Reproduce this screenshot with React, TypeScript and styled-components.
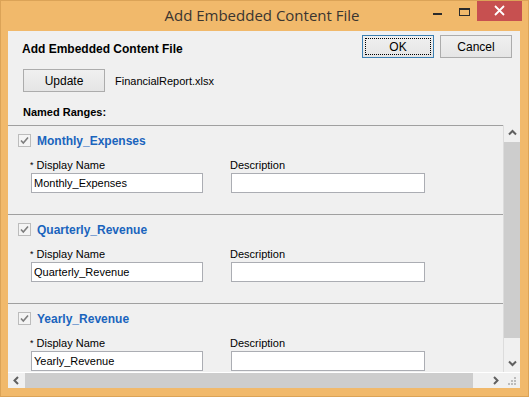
import React from 'react';
import styled, { createGlobalStyle } from 'styled-components';

const ranges = ['Monthly_Expenses', 'Quarterly_Revenue', 'Yearly_Revenue'];

const App = () => {
  return (
    <>
      <GlobalStyle />
      <Window>
        <TitleBar>
          <span />
          <Title>Add Embedded Content File</Title>
          <Captions>
            <CaptionButton $w={26}>
              <svg width="26" height="20">
                <rect x="6" y="12" width="9" height="2" fill="#2b2b2b" />
              </svg>
            </CaptionButton>
            <CaptionButton $w={24}>
              <svg width="24" height="20">
                <rect x="6.5" y="7.5" width="10" height="7" fill="none" stroke="#2b2b2b" />
                <rect x="6" y="7" width="11" height="2" fill="#2b2b2b" />
              </svg>
            </CaptionButton>
            <CaptionButton $w={45} $close>
              <svg width="45" height="20">
                <path d="M18 5 L27 14 M27 5 L18 14" stroke="#fff" strokeWidth="1.8" />
              </svg>
            </CaptionButton>
          </Captions>
        </TitleBar>

        <Client>
          <Header>
            <TopRow>
              <Heading>Add Embedded Content File</Heading>
              <ButtonGroup>
                <Button $default>OK</Button>
                <Button>Cancel</Button>
              </ButtonGroup>
            </TopRow>
            <FileRow>
              <Button $w={82}>Update</Button>
              <FileName>FinancialReport.xlsx</FileName>
            </FileRow>
            <SectionLabel>Named Ranges:</SectionLabel>
          </Header>

          <Panel>
            <PanelBody>
              <Content>
                {ranges.map((name) => (
                  <RangeSection key={name}>
                    <CheckRow>
                      <Check />
                      <RangeName>{name}</RangeName>
                    </CheckRow>
                    <Fields>
                      <FieldLabel>
                        <Req>*</Req> Display Name
                      </FieldLabel>
                      <FieldLabel>Description</FieldLabel>
                      <TextBox value={name} readOnly />
                      <TextBox value="" readOnly />
                    </Fields>
                  </RangeSection>
                ))}
              </Content>
              <VScroll>
                <ArrowBox $h={17}>
                  <Chevron dir="up" />
                </ArrowBox>
                <Thumb style={{ height: 196 }} />
                <Spacer />
                <ArrowBox $h={17}>
                  <Chevron dir="down" />
                </ArrowBox>
              </VScroll>
            </PanelBody>
            <HScroll>
              <ArrowBox $w={17}>
                <Chevron dir="left" />
              </ArrowBox>
              <Thumb style={{ width: 448 }} />
              <Spacer />
              <ArrowBox $w={17}>
                <Chevron dir="right" />
              </ArrowBox>
              <Corner>
                <svg width="16" height="15">
                  {[
                    [10, 4],
                    [7, 7],
                    [10, 7],
                    [4, 10],
                    [7, 10],
                    [10, 10],
                  ].map(([x, y]) => (
                    <rect key={`${x}-${y}`} x={x} y={y} width="2" height="2" fill="#bcbcbc" />
                  ))}
                </svg>
              </Corner>
            </HScroll>
          </Panel>
        </Client>
      </Window>
    </>
  );
};

export default App;

const Check = () => (
  <svg width="13" height="13">
    <rect x="0.5" y="0.5" width="12" height="12" fill="#f4f4f4" stroke="#bcbcbc" />
    <polyline points="3,6.5 5.3,9 10,3.5" fill="none" stroke="#7d7d7d" strokeWidth="1.6" />
  </svg>
);

const chevronPoints: Record<string, string> = {
  up: '1,5.5 4.5,2 8,5.5',
  down: '1,2.5 4.5,6 8,2.5',
  left: '6,1 2.5,4.5 6,8',
  right: '3,1 6.5,4.5 3,8',
};

const Chevron = ({ dir }: { dir: 'up' | 'down' | 'left' | 'right' }) => (
  <svg width="9" height="9">
    <polyline points={chevronPoints[dir]} fill="none" stroke="#606060" strokeWidth="2" />
  </svg>
);

const GlobalStyle = createGlobalStyle`
  html, body {
    margin: 0;
    padding: 0;
  }
  body {
    font-family: "Liberation Sans", Arial, sans-serif;
    background: #f1b96b;
  }
`;

const Window = styled.div`
  width: 529px;
  height: 397px;
  box-sizing: border-box;
  background: #f1b96b;
  border: 1px solid #dba357;
  padding: 0 8px 8px 7px;
  display: flex;
  flex-direction: column;
`;

const TitleBar = styled.div`
  height: 30px;
  display: grid;
  grid-template-columns: 1fr auto 1fr;
  margin-right: -2px;
`;

const Title = styled.div`
  font-family: "Open Sans", "Liberation Sans", sans-serif;
  font-size: 15px;
  line-height: 29px;
  color: #3a3530;
  padding-right: 6px;
`;

const Captions = styled.div`
  display: flex;
  justify-content: flex-end;
  align-items: flex-start;
`;

const CaptionButton = styled.div<{ $w: number; $close?: boolean }>`
  width: ${(p) => p.$w}px;
  height: 20px;
  background: ${(p) => (p.$close ? '#c75050' : 'transparent')};
  svg {
    display: block;
  }
`;

const Client = styled.div`
  flex: 1;
  background: #f0f0f0;
  display: flex;
  flex-direction: column;
  min-height: 0;
`;

const Header = styled.div`
  padding: 4px 8px 6px 15px;
`;

const TopRow = styled.div`
  display: flex;
  justify-content: space-between;
  align-items: flex-start;
`;

const Heading = styled.div`
  font-size: 12px;
  font-weight: bold;
  color: #000;
  padding-top: 7px;
  margin-left: -1px;
`;

const ButtonGroup = styled.div`
  display: flex;
  gap: 6px;
`;

const Button = styled.div<{ $w?: number; $default?: boolean }>`
  width: ${(p) => p.$w ?? 72}px;
  height: 23px;
  box-sizing: border-box;
  display: flex;
  align-items: center;
  justify-content: center;
  font-size: 12px;
  color: #000;
  background: linear-gradient(#f0f0f0, #e5e5e5);
  border: 1px solid ${(p) => (p.$default ? '#3c7fb1' : '#acacac')};
  outline: ${(p) => (p.$default ? '1px dotted #000' : 'none')};
  outline-offset: -4px;
`;

const FileRow = styled.div`
  display: flex;
  align-items: center;
  gap: 10px;
  margin-top: 11px;
`;

const FileName = styled.span`
  font-size: 11px;
  color: #000;
`;

const SectionLabel = styled.div`
  margin-top: 13px;
  font-size: 11px;
  line-height: 14px;
  font-weight: bold;
  color: #000;
`;

const Panel = styled.div`
  flex: 1;
  display: flex;
  flex-direction: column;
  min-height: 0;
`;

const PanelBody = styled.div`
  flex: 1;
  display: flex;
  min-height: 0;
`;

const Content = styled.div`
  flex: 1;
  overflow: hidden;
  border-right: 1px solid #dcdcdc;
`;

const RangeSection = styled.div`
  height: 89px;
  box-sizing: border-box;
  border-top: 1px solid #a0a0a0;
  padding: 7px 0 0 10px;
`;

const CheckRow = styled.div`
  height: 15px;
  display: flex;
  align-items: center;
  gap: 6px;
  svg {
    display: block;
  }
`;

const RangeName = styled.span`
  font-size: 12px;
  font-weight: bold;
  color: #1a64bd;
`;

const Fields = styled.div`
  display: grid;
  grid-template-columns: 172px 194px;
  column-gap: 28px;
  row-gap: 1px;
  margin: 10px 0 0 13px;
`;

const FieldLabel = styled.div`
  font-size: 11px;
  line-height: 14px;
  color: #000;
  margin-left: -1px;
`;

const Req = styled.span`
  font-size: 9px;
  vertical-align: top;
`;

const TextBox = styled.input`
  height: 20px;
  box-sizing: border-box;
  border: 1px solid #abadb3;
  background: #fff;
  font-family: "Liberation Sans", Arial, sans-serif;
  font-size: 11px;
  color: #000;
  padding: 0 2px;
  margin: 0;
  outline: none;
`;

const VScroll = styled.div`
  width: 16px;
  background: #f0f0f0;
  display: flex;
  flex-direction: column;
`;

const HScroll = styled.div`
  height: 16px;
  box-sizing: border-box;
  border-top: 1px solid #fff;
  background: #f0f0f0;
  display: flex;
`;

const ArrowBox = styled.div<{ $w?: number; $h?: number }>`
  ${(p) => (p.$w ? `width: ${p.$w}px;` : '')}
  ${(p) => (p.$h ? `height: ${p.$h}px;` : '')}
  display: flex;
  align-items: center;
  justify-content: center;
  flex-shrink: 0;
  svg {
    display: block;
  }
`;

const Thumb = styled.div`
  background: #cdcdcd;
  flex-shrink: 0;
`;

const Spacer = styled.div`
  flex: 1;
`;

const Corner = styled.div`
  width: 16px;
  display: flex;
  align-items: flex-end;
  justify-content: flex-end;
  svg {
    display: block;
  }
`;
